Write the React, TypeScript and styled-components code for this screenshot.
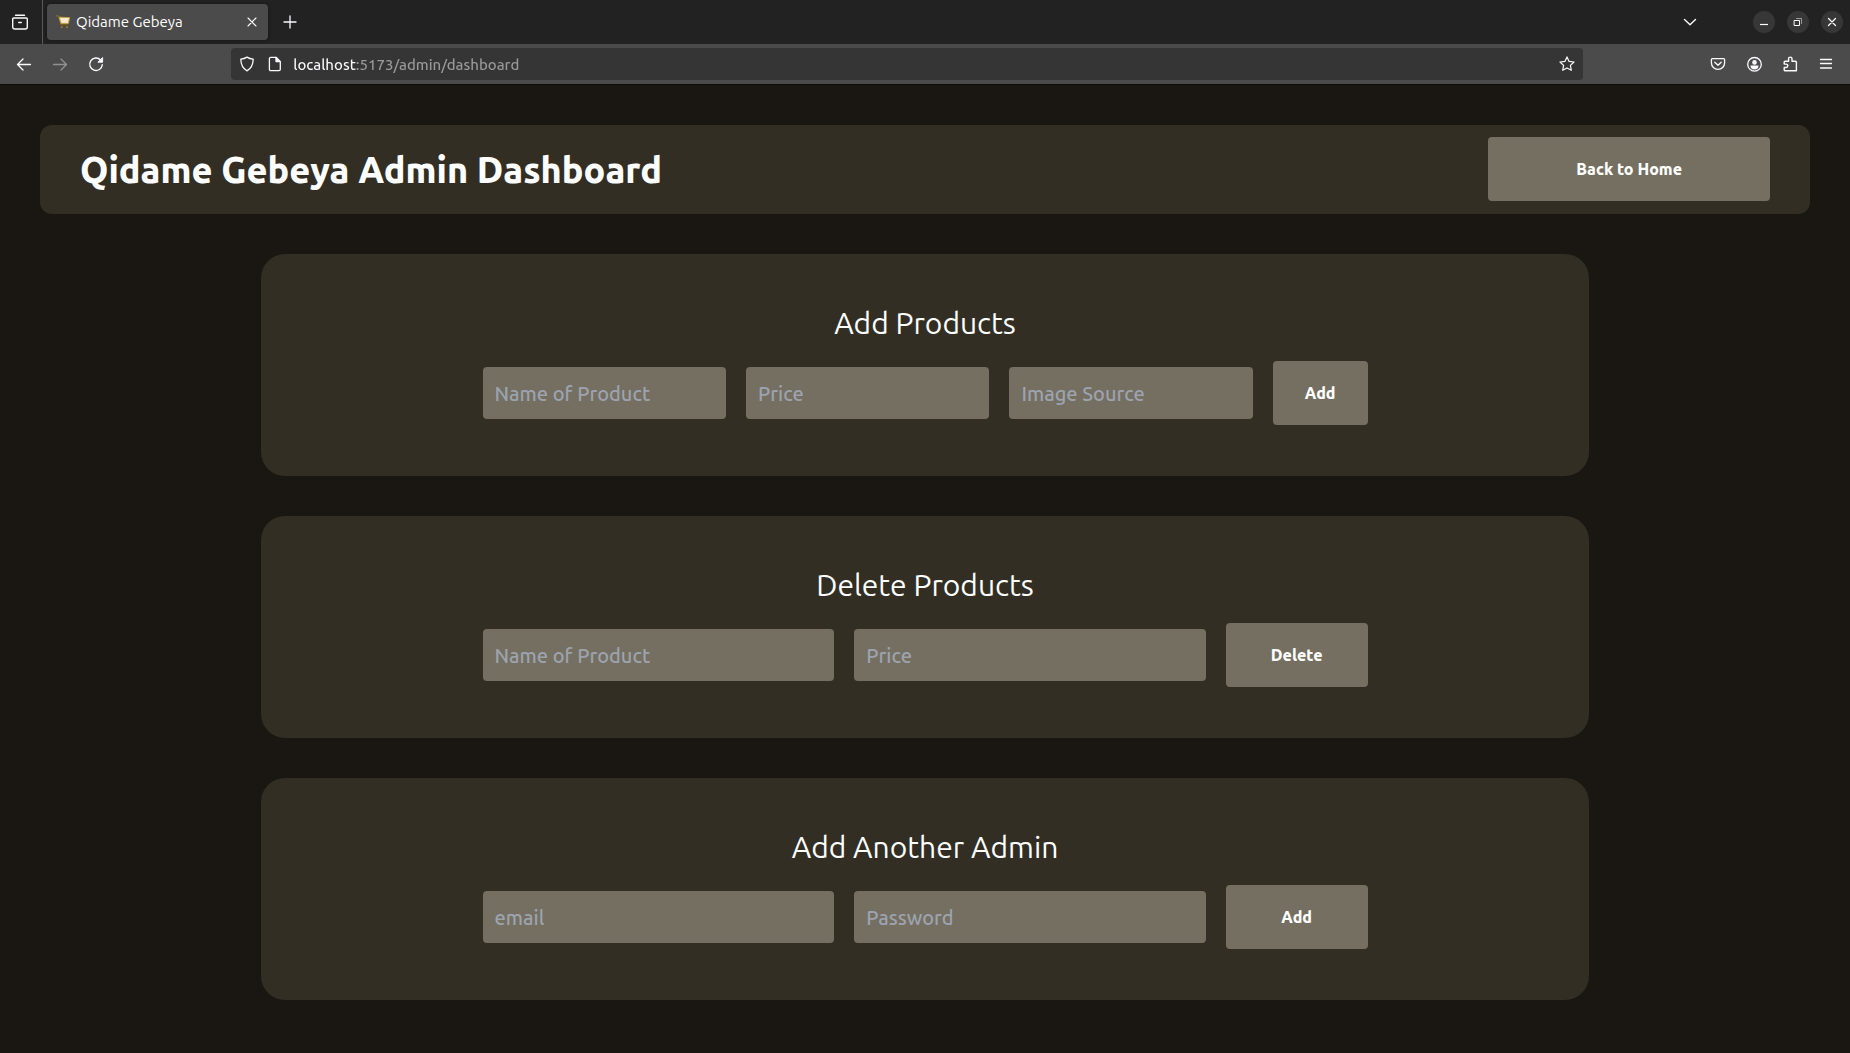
import React from "react";
import styled, { createGlobalStyle, css } from "styled-components";

const colors = {
  titleBar: "#222222",
  toolbar: "#4b4b4b",
  field: "#353535",
  windowButton: "#373737",
  page: "#1a1712",
  card: "#322e24",
  control: "#746f60",
  placeholder: "#9ca3af",
  icon: "#fbfbfe",
};

const weights = { regular: 400, medium: 500, bold: 800 };

const GlobalStyle = createGlobalStyle`
  *, *::before, *::after { box-sizing: border-box; }
  body {
    margin: 0;
    background: ${colors.page};
    color: #ffffff;
    font-family: Ubuntu, "Noto Sans", sans-serif;
    font-weight: ${weights.regular};
  }
  button, input { font: inherit; color: inherit; border: 0; margin: 0; }
  button { cursor: pointer; }
`;

const BrowserChrome = styled.div`
  border-bottom: 1px solid #0f0d0a;
`;

const TabBar = styled.div`
  display: flex;
  align-items: center;
  height: 44px;
  background: ${colors.titleBar};
`;

const ViewSlot = styled.div`
  display: flex;
  align-self: stretch;
  align-items: center;
  padding: 0 4px 0 2px;
  margin-right: 4px;
  border-right: 1px solid #5a5a5a;
`;

const IconButton = styled.button<{ $size?: number; $dim?: boolean }>`
  display: inline-flex;
  flex: none;
  align-items: center;
  justify-content: center;
  width: ${({ $size = 36 }) => $size}px;
  height: ${({ $size = 36 }) => Math.min($size, 32)}px;
  padding: 0;
  background: transparent;
  border-radius: 4px;
  color: ${colors.icon};
  opacity: ${({ $dim }) => ($dim ? 0.4 : 1)};
`;

const Tab = styled.div`
  display: flex;
  align-items: center;
  width: 221px;
  height: 36px;
  padding: 0 4px 0 8px;
  background: ${colors.toolbar};
  border-radius: 4px;
  box-shadow: 0 0 4px rgba(0, 0, 0, 0.4);
`;

const TabTitle = styled.span`
  flex: 1;
  padding-left: 5px;
  font-size: 15px;
  line-height: 20px;
  white-space: nowrap;
`;

const WindowControls = styled.div`
  display: flex;
  align-items: center;
  gap: 12px;
  margin-left: auto;
  padding-right: 7px;
`;

const WindowButton = styled(IconButton).attrs({ $size: 22 })`
  background: ${colors.windowButton};
  border-radius: 50%;
`;

const TabListButton = styled(IconButton)`
  margin-right: 33px;
`;

const Toolbar = styled.div`
  display: flex;
  align-items: center;
  height: 40px;
  padding: 0 6px;
  background: ${colors.toolbar};
`;

const Spring = styled.div`
  flex: 2 1 0;
`;

const AddressBar = styled.div`
  display: flex;
  flex: 23 1 0;
  align-items: center;
  height: 32px;
  padding: 0 2px;
  background: ${colors.field};
  border-radius: 4px;
`;

const AddressInput = styled.input`
  flex: 1;
  min-width: 0;
  height: 32px;
  padding: 0 0 0 4px;
  outline: 0;
  font-size: 15px;
  font-weight: ${weights.medium};
  color: transparent;
  background: linear-gradient(90deg, #fbfbfe 67px, #9a9a9b 67px) text;
`;

const Page = styled.main`
  display: flex;
  flex-direction: column;
  align-items: center;
  gap: 40px;
  padding: 40px;
`;

const PageHeader = styled.header`
  display: flex;
  align-items: flex-start;
  justify-content: space-between;
  width: 100%;
  padding: 12px 40px;
  background: ${colors.card};
  border-radius: 12px;
`;

const Title = styled.h1`
  margin: 0;
  font-size: 36px;
  line-height: 65px;
  font-weight: ${weights.bold};
`;

const controlBox = css`
  min-width: 0;
  background: ${colors.control};
  border-radius: 4px;
`;

const ActionButton = styled.button`
  ${controlBox}
  height: 64px;
  padding: 0 12px;
  font-size: 16px;
  line-height: 24px;
  font-weight: ${weights.bold};
  white-space: nowrap;
`;

const HomeButton = styled(ActionButton)`
  width: calc(100% / 6);
`;

const Card = styled.section`
  display: flex;
  flex-direction: column;
  align-items: center;
  gap: 20px;
  width: 75%;
  padding: 51px 0;
  background: ${colors.card};
  border-radius: 24px;
`;

const CardTitle = styled.h2`
  margin: 0;
  font-size: 30px;
  line-height: 36px;
  font-weight: ${weights.regular};
`;

const Form = styled.form<{ $columns: string }>`
  display: grid;
  grid-template-columns: ${({ $columns }) => $columns};
  align-items: center;
  gap: 20px;
  width: calc(100% * 2 / 3);
`;

const Field = styled.input`
  ${controlBox}
  width: 100%;
  height: 52px;
  padding: 0 12px;
  font-size: 20px;
  line-height: 28px;
  font-weight: ${weights.medium};
  &::placeholder { color: ${colors.placeholder}; opacity: 1; }
`;

type IconProps = { size?: number; width?: number; children: React.ReactNode };

const Icon = ({ size = 16, width = 1.2, children }: IconProps) => (
  <svg
    width={size}
    height={size}
    viewBox={`0 0 ${size} ${size}`}
    fill="none"
    stroke="currentColor"
    strokeWidth={width}
    strokeLinecap="round"
    strokeLinejoin="round"
    aria-hidden="true"
  >
    {children}
  </svg>
);

const CartIcon = () => (
  <svg width="16" height="16" viewBox="0 0 16 16" aria-hidden="true">
    <path d="M1 1.800h2.500l2.200 8.400h7.600" fill="none" stroke="#8a6a1c" strokeWidth="1.2" />
    <path d="M4.200 3.200 14.600 3.600 13.400 9.400H6z" fill="#f6ebc8" stroke="#c2a04c" strokeWidth="1" />
    <path d="M5.600 11.200h8" stroke="#6d5212" strokeWidth="1" />
    <circle cx="6.800" cy="13.200" r=".9" fill="#a8842c" />
    <circle cx="12" cy="13.200" r=".9" fill="#a8842c" />
  </svg>
);

type Section = {
  title: string;
  columns: string;
  fields: { label: string; type: string }[];
  action: string;
};

const sections: Section[] = [
  {
    title: "Add Products",
    columns: "repeat(3, 18fr) 7fr",
    fields: [
      { label: "Name of Product", type: "text" },
      { label: "Price", type: "text" },
      { label: "Image Source", type: "text" },
    ],
    action: "Add",
  },
  {
    title: "Delete Products",
    columns: "repeat(2, 72fr) 29fr",
    fields: [
      { label: "Name of Product", type: "text" },
      { label: "Price", type: "text" },
    ],
    action: "Delete",
  },
  {
    title: "Add Another Admin",
    columns: "repeat(2, 72fr) 29fr",
    fields: [
      { label: "email", type: "email" },
      { label: "Password", type: "password" },
    ],
    action: "Add",
  },
];

const Browser = () => (
  <BrowserChrome>
    <TabBar>
      <ViewSlot>
        <IconButton aria-label="View recent browsing">
          <Icon width={1.4}>
            <path d="M3.500 1.200h9" />
            <path d="M1.700 4h12.600a1 1 0 0 1 1 1v8a2 2 0 0 1-2 2H2.700a2 2 0 0 1-2-2V5a1 1 0 0 1 1-1z" />
            <path d="M6.700 8.500h2.600" />
          </Icon>
        </IconButton>
      </ViewSlot>
      <Tab>
        <CartIcon />
        <TabTitle>Qidame Gebeya</TabTitle>
        <IconButton $size={24} aria-label="Close tab">
          <Icon size={10} width={1.1}><path d="m1 1 8 8M9 1 1 9" /></Icon>
        </IconButton>
      </Tab>
      <IconButton $size={44} aria-label="New tab">
        <Icon size={14} width={1.3}><path d="M7 1v12M1 7h12" /></Icon>
      </IconButton>
      <WindowControls>
        <TabListButton aria-label="List all tabs">
          <Icon size={14} width={1.4}><path d="m1.500 4.500 5.500 5.200 5.500-5.200" /></Icon>
        </TabListButton>
        <WindowButton aria-label="Minimize">
          <Icon size={10}><path d="M1 7.500h8" strokeLinecap="butt" /></Icon>
        </WindowButton>
        <WindowButton aria-label="Restore">
          <Icon size={10} width={1}>
            <path d="M1.500 3.500h5v5h-5z" strokeLinejoin="miter" />
            <path d="M3.500 1.500h5v5" opacity=".5" strokeLinejoin="miter" />
          </Icon>
        </WindowButton>
        <WindowButton aria-label="Close window">
          <Icon size={10} width={1.3}><path d="m1.500 1.500 7 7M8.500 1.500l-7 7" /></Icon>
        </WindowButton>
      </WindowControls>
    </TabBar>
    <Toolbar>
      <IconButton aria-label="Back">
        <Icon width={1.3}><path d="M14.500 8.500h-13M7 3 1.500 8.500 7 14" /></Icon>
      </IconButton>
      <IconButton $dim aria-label="Forward">
        <Icon width={1.3}><path d="M1.500 8.500h13M9 3l5.500 5.500L9 14" /></Icon>
      </IconButton>
      <IconButton aria-label="Reload">
        <Icon width={1.4}>
          <path d="M12.600 3.900a6.300 6.300 0 1 0 1.700 4.900" />
          <path d="M14.600 1.900v4.300h-4.300z" fill="currentColor" strokeWidth="1" />
        </Icon>
      </IconButton>
      <Spring />
      <AddressBar>
        <IconButton $size={28} aria-label="Tracking protection">
          <Icon width={1.3}>
            <path d="M8 1.100c1.800 1.200 3.800 1.800 6.200 2-.1 5.600-1.600 9.300-6.200 11.800C3.400 12.400 1.900 8.700 1.800 3.100 4.200 2.900 6.200 2.300 8 1.100z" />
          </Icon>
        </IconButton>
        <IconButton $size={28} aria-label="Site information">
          <Icon width={1.3}>
            <path d="M3.700 1.300h5.300l4.300 4.300v7.700a1.300 1.300 0 0 1-1.300 1.300H3.700a1.300 1.300 0 0 1-1.300-1.300V2.600a1.300 1.300 0 0 1 1.300-1.300z" />
            <path d="M9 1.500v4.100h4.200z" fill="currentColor" />
          </Icon>
        </IconButton>
        <AddressInput aria-label="Address" defaultValue="localhost:5173/admin/dashboard" />
        <IconButton $size={28} aria-label="Bookmark this page">
          <Icon width={1.2}>
            <path d="m8 .9 2.100 4.500 4.900.6-3.600 3.400.9 4.900L8 11.900l-4.300 2.400.9-4.900L1 6l4.900-.6z" />
          </Icon>
        </IconButton>
      </AddressBar>
      <Spring />
      <IconButton aria-label="Save to Pocket">
        <Icon width={1.3}>
          <path d="M2.400 2.600h11.200c.6 0 1 .4 1 1v3.200a6.600 6.600 0 0 1-13.200 0V3.600c0-.6.4-1 1-1z" />
          <path d="M4.800 6.300 8 9.300l3.200-3" />
        </Icon>
      </IconButton>
      <IconButton aria-label="Account">
        <Icon width={1.3}>
          <circle cx="8.500" cy="8.300" r="6.800" />
          <circle cx="8.500" cy="6.400" r="2.300" fill="currentColor" stroke="none" />
          <path d="M4.500 9.600h8a4 4 0 0 1-8 0z" fill="currentColor" stroke="none" />
        </Icon>
      </IconButton>
      <IconButton aria-label="Extensions">
        <Icon width={1.4}>
          <path d="M3.200 5.200h3.400V2.800a1.700 1.700 0 0 1 3.400 0v2.400h3.400a1 1 0 0 1 1 1v8.500H3.200a1 1 0 0 1-1-1v-2.200h1.900a1.700 1.700 0 0 0 0-3.400H2.200V6.200a1 1 0 0 1 1-1z" />
        </Icon>
      </IconButton>
      <IconButton aria-label="Open application menu">
        <Icon width={1.3}><path d="M2.500 3.500h11M2.500 7.500h11M2.500 12h11" /></Icon>
      </IconButton>
    </Toolbar>
  </BrowserChrome>
);

export default function App() {
  return (
    <>
      <GlobalStyle />
      <Browser />
      <Page>
        <PageHeader>
          <Title>Qidame Gebeya Admin Dashboard</Title>
          <HomeButton type="button">Back to Home</HomeButton>
        </PageHeader>
        {sections.map(({ title, columns, fields, action }) => (
          <Card key={title}>
            <CardTitle>{title}</CardTitle>
            <Form $columns={columns} onSubmit={(event) => event.preventDefault()}>
              {fields.map(({ label, type }) => (
                <Field key={label} type={type} placeholder={label} aria-label={label} />
              ))}
              <ActionButton type="submit">{action}</ActionButton>
            </Form>
          </Card>
        ))}
      </Page>
    </>
  );
}
